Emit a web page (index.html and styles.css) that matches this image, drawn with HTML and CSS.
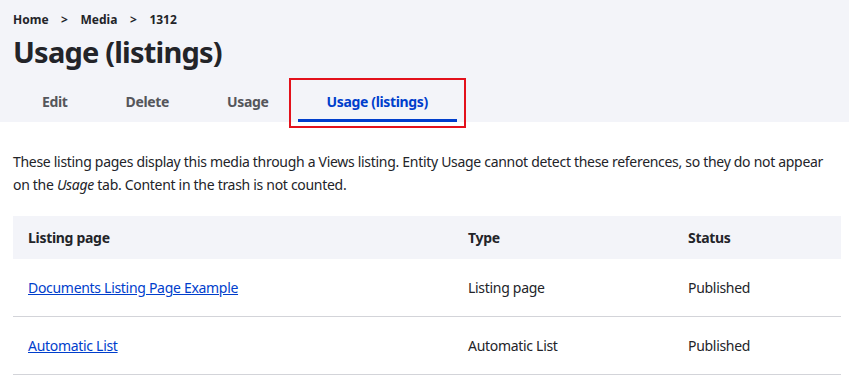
FILE: index.html
```html
<!DOCTYPE html>
<html lang="en">
<head>
  <meta charset="UTF-8">
  <title>Usage (listings)</title>
  <link rel="stylesheet" href="styles.css">
</head>
<body>
  <header class="page-header">
    <nav class="breadcrumb">
      <a href="#">Home</a>
      <span class="sep">&gt;</span>
      <a href="#">Media</a>
      <span class="sep">&gt;</span>
      <span>1312</span>
    </nav>
    <h1 class="page-title">Usage (listings)</h1>
    <ul class="tabs">
      <li><a href="#">Edit</a></li>
      <li><a href="#">Delete</a></li>
      <li><a href="#">Usage</a></li>
      <li class="active"><a href="#">Usage (listings)</a></li>
    </ul>
  </header>
  <main class="content">
    <p class="intro">These listing pages display this media through a Views listing. Entity Usage cannot detect these references, so they do not appear on the <em>Usage</em> tab. Content in the trash is not counted.</p>
    <table class="listing">
      <thead>
        <tr>
          <th class="col-page">Listing page</th>
          <th class="col-type">Type</th>
          <th>Status</th>
        </tr>
      </thead>
      <tbody>
        <tr>
          <td><a href="#">Documents Listing Page Example</a></td>
          <td>Listing page</td>
          <td>Published</td>
        </tr>
        <tr>
          <td><a href="#">Automatic List</a></td>
          <td>Automatic List</td>
          <td>Published</td>
        </tr>
      </tbody>
    </table>
  </main>
</body>
</html>
```
FILE: styles.css
```css
/* Page */
body {
  margin: 0;
  font-family: 'Noto Sans', sans-serif;
  color: #232429;
  background: #fff;
  letter-spacing: -0.3px;
}
a {
  color: #003ecc;
}

/* Header */
.page-header {
  background: #f3f4f9;
  padding: 12px 13px 0;
  height: 110px;
}
.breadcrumb {
  font-size: 12px;
  font-weight: bold;
  line-height: 16px;
  display: flex;
  letter-spacing: 0;
}
.breadcrumb a {
  color: #232429;
  text-decoration: none;
}
.breadcrumb .sep {
  width: 32px;
  text-align: center;
}
.page-title {
  margin: 4px 0 0;
  font-size: 29px;
  line-height: 40px;
  font-weight: bold;
  letter-spacing: -0.8px;
}
.tabs {
  list-style: none;
  margin: 14px 0 0;
  padding: 0;
  display: flex;
}
.tabs li {
  position: relative;
}
.tabs a {
  display: block;
  padding: 6px 29px 0;
  height: 36px;
  font-size: 14px;
  font-weight: bold;
  color: #55565b;
  text-decoration: none;
  box-sizing: border-box;
  letter-spacing: -0.35px;
}
.tabs .active a {
  color: #003ecc;
  border-bottom: 3px solid #003ecc;
}
/* highlight frame around the current tab */
.tabs .active::after {
  content: "";
  position: absolute;
  top: -8px;
  bottom: -6px;
  left: -9px;
  right: -9px;
  border: 2px solid #e3111c;
}

/* Content */
.content {
  padding: 28px 8px 0 13px;
}
.intro {
  margin: 0 0 20px;
  font-size: 14px;
  line-height: 23px;
}
.listing {
  width: 100%;
  border-collapse: collapse;
  font-size: 14px;
}
.listing th {
  background: #f3f4f9;
  text-align: left;
  height: 43px;
  padding: 0 15px;
  font-weight: bold;
}
.listing td {
  height: 57px;
  padding: 0 15px;
  border-bottom: 1px solid #d3d4d9;
}
.col-page {
  width: 410px;
}
.col-type {
  width: 190px;
}
```
